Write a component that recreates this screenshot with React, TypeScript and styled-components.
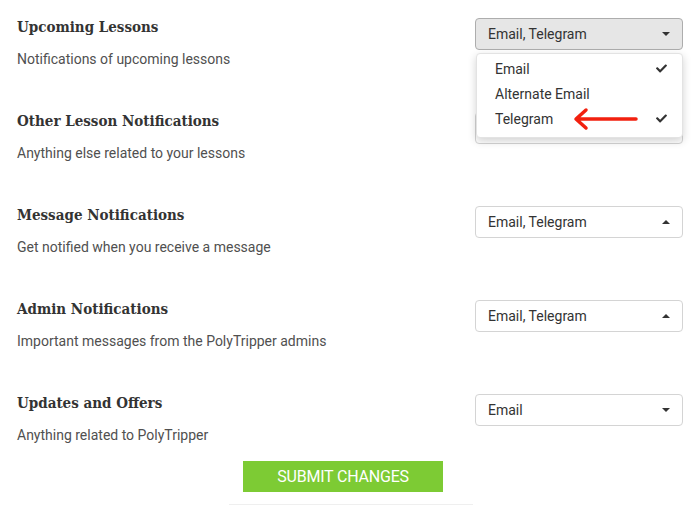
import React from 'react';
import styled, { createGlobalStyle } from 'styled-components';
import { FaCheck } from 'react-icons/fa';

const GlobalStyle = createGlobalStyle`
  body {
    margin: 0;
    background: #ffffff;
    font-family: 'Roboto', 'Liberation Sans', sans-serif;
  }
`;

const Page = styled.div`
  display: flex;
  flex-direction: column;
  gap: 25px;
  padding: 16px 17px 0 17px;
  width: 666px;
`;

const Row = styled.div`
  display: flex;
  justify-content: space-between;
  align-items: flex-start;
  height: 69px;
`;

const TextCol = styled.div`
  display: flex;
  flex-direction: column;
  gap: 10px;
`;

const Heading = styled.div`
  font-family: 'DejaVu Serif Condensed', 'DejaVu Serif', 'Liberation Serif', serif;
  font-stretch: condensed;
  font-weight: bold;
  font-size: 15px;
  line-height: 22px;
  color: #333333;
`;

const Description = styled.div`
  font-size: 14px;
  line-height: 22px;
  color: #505050;
`;

const SelectWrap = styled.div`
  position: relative;
  margin-top: 2px;
  width: 208px;
`;

const SelectBox = styled.div<{ $open?: boolean }>`
  box-sizing: border-box;
  height: 32px;
  display: flex;
  align-items: center;
  justify-content: space-between;
  padding: 0 12px 0 12px;
  border: 1px solid ${p => (p.$open ? '#adadad' : '#d4d4d4')};
  border-radius: 4px;
  background: ${p => (p.$open ? '#e6e6e6' : '#ffffff')};
  font-size: 14px;
  color: #333333;
`;

const Caret = styled.span<{ $up?: boolean }>`
  width: 0;
  height: 0;
  border-left: 4px solid transparent;
  border-right: 4px solid transparent;
  ${p => (p.$up ? 'border-bottom: 4px solid #333;' : 'border-top: 4px solid #333;')}
`;

const Menu = styled.div`
  position: absolute;
  top: 35px;
  left: 1px;
  right: 0;
  z-index: 2;
  box-sizing: border-box;
  padding: 2px 0 6px;
  background: #ffffff;
  border: 1px solid #e3e3e3;
  border-radius: 4px;
  box-shadow: 0 3px 8px rgba(0, 0, 0, 0.18);
`;

const MenuItem = styled.div`
  display: flex;
  align-items: center;
  justify-content: space-between;
  height: 25px;
  padding: 0 15px 0 18px;
  font-size: 14px;
  color: #333333;
`;

const Arrow = styled.svg`
  position: absolute;
  left: 98px;
  top: 89px;
  z-index: 3;
`;

const SubmitButton = styled.button`
  align-self: flex-start;
  margin: -25px 0 0 226px;
  width: 200px;
  height: 31px;
  border: none;
  background: #7dcb34;
  color: #ffffff;
  font-family: 'Roboto', sans-serif;
  font-size: 16px;
  letter-spacing: -0.2px;
  text-transform: uppercase;
  padding: 0;
`;

const Divider = styled.div`
  align-self: flex-start;
  margin: -13px 0 0 212px;
  width: 244px;
  height: 1px;
  background: #efefef;
`;

interface Setting {
  title: string;
  description: string;
  value: string;
  up?: boolean;
}

const settings: Setting[] = [
  { title: 'Upcoming Lessons', description: 'Notifications of upcoming lessons', value: 'Email, Telegram' },
  { title: 'Other Lesson Notifications', description: 'Anything else related to your lessons', value: 'Email, Telegram' },
  { title: 'Message Notifications', description: 'Get notified when you receive a message', value: 'Email, Telegram', up: true },
  { title: 'Admin Notifications', description: 'Important messages from the PolyTripper admins', value: 'Email, Telegram', up: true },
  { title: 'Updates and Offers', description: 'Anything related to PolyTripper', value: 'Email' },
];

const options = [
  { label: 'Email', checked: true },
  { label: 'Alternate Email', checked: false },
  { label: 'Telegram', checked: true },
];

const App: React.FC = () => {
  return (
    <>
      <GlobalStyle />
      <Page>
        {settings.map((s, i) => (
          <Row key={s.title}>
            <TextCol>
              <Heading>{s.title}</Heading>
              <Description>{s.description}</Description>
            </TextCol>
            <SelectWrap>
              <SelectBox $open={i === 0}>
                {/* the second select sits under the open menu, so its label is hidden */}
                <span style={{ visibility: i === 1 ? 'hidden' : 'visible' }}>{s.value}</span>
                <Caret $up={s.up} />
              </SelectBox>
              {i === 0 && (
                <>
                  <Menu>
                    {options.map(o => (
                      <MenuItem key={o.label}>
                        <span>{o.label}</span>
                        {o.checked && <FaCheck size={11} color="#333" />}
                      </MenuItem>
                    ))}
                  </Menu>
                  <Arrow width="66" height="24" viewBox="0 0 66 24">
                    <path
                      d="M63 12 H4 M13 3 L3 12 L13 21"
                      fill="none"
                      stroke="#f2200f"
                      strokeWidth="3.5"
                      strokeLinecap="round"
                      strokeLinejoin="round"
                    />
                  </Arrow>
                </>
              )}
            </SelectWrap>
          </Row>
        ))}
        <SubmitButton>Submit Changes</SubmitButton>
        <Divider />
      </Page>
    </>
  );
};

export default App;
